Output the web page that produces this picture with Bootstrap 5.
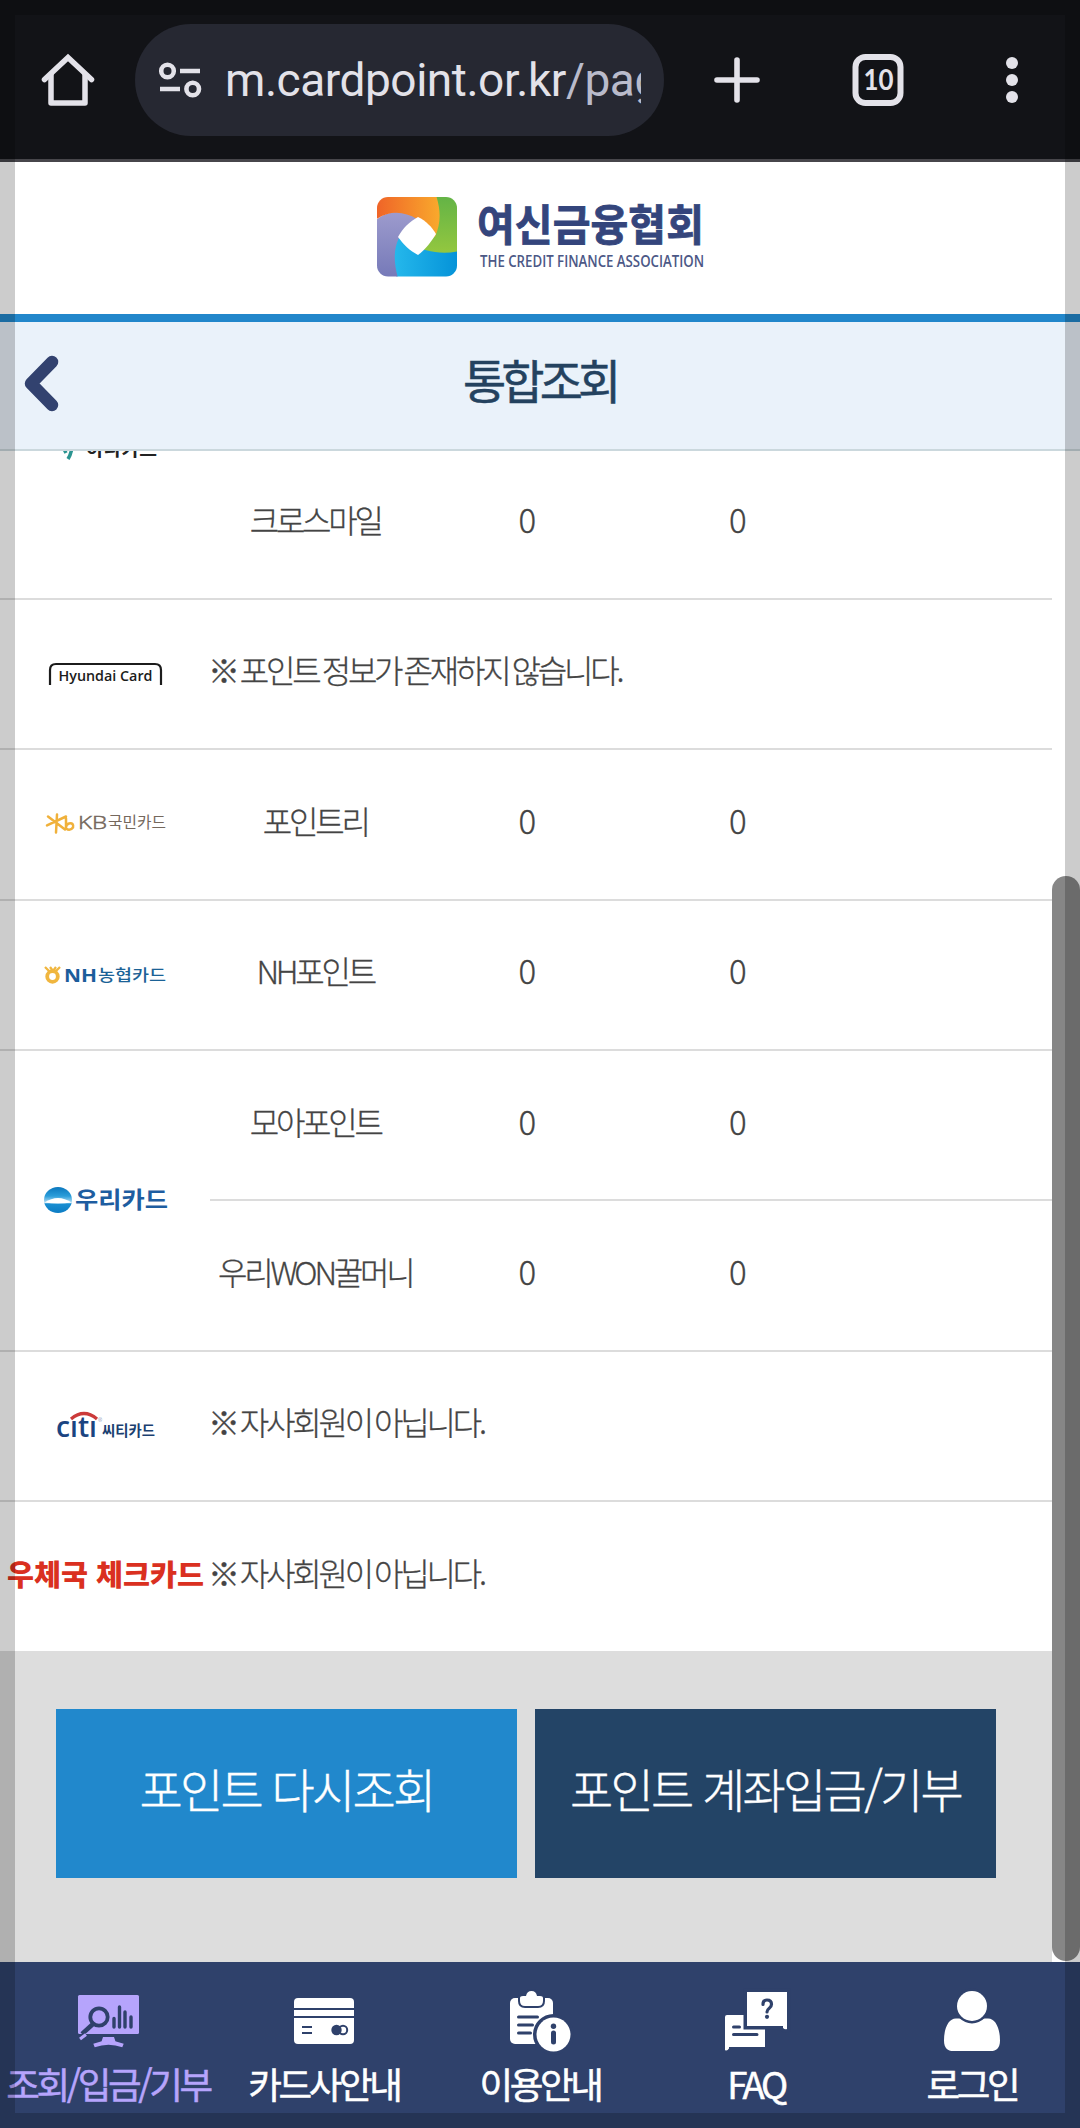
<!DOCTYPE html>
<html lang="ko">
<head>
<meta charset="utf-8">
<meta name="viewport" content="width=device-width, initial-scale=1">
<title>통합조회</title>
<link href="https://cdn.jsdelivr.net/npm/bootstrap@5.3.0/dist/css/bootstrap.min.css" rel="stylesheet">
<script src="https://cdn.jsdelivr.net/npm/bootstrap@5.3.0/dist/js/bootstrap.bundle.min.js"></script>
<style>
body{font-family:"Noto Sans CJK KR","Noto Sans",sans-serif;font-weight:300;color:#444;background:#fff}
svg{display:block;overflow:visible}
.screen{width:1080px;height:2128px}
.frame-edge{inset:0;border:15px solid rgba(0,0,0,.2);z-index:20;pointer-events:none}
.browser-bar{height:162px;background:#121317;border-bottom:3px solid #47464b}
.url-pill{width:529px;height:112px;margin-left:41px;padding:0 23px 0 24px;background:#262832}
.url-text{font:400 46px/112px Roboto,sans-serif;color:#e3e2e9;letter-spacing:-.45px;margin-left:23px}
.url-text span{color:#b9bbcb}
.brand-bar{height:152px}
.title-bar{height:137px;background:#eaf2fa;border-top:8px solid #2287cb;border-bottom:2px solid #cbd8dd;padding-bottom:6px;z-index:5}
.title-bar h1{font-size:47px;font-weight:400;-webkit-text-stroke:.5px #24425f;letter-spacing:-4.9px;color:#24425f;line-height:60px;margin-left:419px;padding-bottom:7px}
.list-area{width:1052px;height:1200px}
.point-list{margin-top:-152px}
.issuer{border-bottom:2px solid #dcdcdc}
.issuer-logo{width:210px}
.point-row{height:148.4px;font-size:32px;letter-spacing:-3.2px;line-height:48px;padding-bottom:9px;-webkit-text-stroke:.3px #444}
.point-row+.point-row{border-top:2px solid #dcdcdc;height:150.4px}
.point-row>*{width:210.5px;text-align:center}
.point-row>.num{letter-spacing:0;padding-left:3px;font-size:33px}
.point-row>.note{width:auto;text-align:left;margin-left:-2px;word-spacing:-2.7px}
.action-area{width:1052px;height:311px;background:#ddd;padding:58px 56px 0;gap:18px}
.act{height:169px;border-radius:0;border:0;font-size:47px;font-weight:300;-webkit-text-stroke:.4px #fff;letter-spacing:-2.7px;color:#fff;padding:0 0 10px;white-space:nowrap}
.act,.act:hover{color:#fff}
.act-a,.act-a:hover{background:#2188cc}
.act-b,.act-b:hover{background:#234466}
.thumb{right:0;top:876px;width:28px;height:1085px;border-radius:14px;background:#868686;z-index:8}
.tabbar{height:166px;background:#2f416b}
.tabbar a{width:216px;color:#fff;text-decoration:none;font-size:36.6px;font-weight:400;-webkit-text-stroke:.5px currentColor;letter-spacing:-3.4px;line-height:44px;text-align:center;white-space:nowrap}
.tabbar a.on{color:#b6a4fc}
</style>
</head>
<body>
<div class="screen position-relative overflow-hidden d-flex flex-column">
  <header class="browser-bar d-flex align-items-center flex-shrink-0">
    <svg class="flex-shrink-0" width="94" height="160" viewBox="0 0 94 160" fill="none" stroke="#e3e2e9" stroke-width="5.5" stroke-linecap="round" stroke-linejoin="round"><path stroke-linejoin="miter" d="M44.5 79.5 68 57.5 91.5 79.5"/><path stroke-linecap="butt" d="M51 74V103H85V74"/></svg>
    <div class="url-pill rounded-pill d-flex align-items-center overflow-hidden">
      <svg class="flex-shrink-0" width="43" height="40" viewBox="159 60 43 40" fill="none" stroke="#e3e2e9" stroke-width="4.6"><circle cx="167.5" cy="71" r="6.3"/><path d="M180 71h20M160 89h20"/><circle cx="192.7" cy="89" r="6.3"/></svg>
      <div class="url-text text-nowrap overflow-hidden flex-grow-1">m.cardpoint.or.kr<span>/page</span></div>
    </div>
    <svg width="416" height="160" viewBox="664 0 416 160"><path d="M737 60v40M717 80h40" stroke="#e3e2e9" stroke-width="5.6" stroke-linecap="round"/><rect x="855.5" y="57" width="45" height="46" rx="10" fill="none" stroke="#e3e2e9" stroke-width="6"/><text x="878.500" y="90" font-family="Lato" font-weight="700" font-size="28" fill="#e3e2e9" text-anchor="middle" textLength="30" lengthAdjust="spacingAndGlyphs">10</text><g fill="#e3e2e9"><circle cx="1012" cy="63" r="6"/><circle cx="1012" cy="80" r="6"/><circle cx="1012" cy="97" r="6"/></g></svg>
  </header>

  <div class="brand-bar d-flex justify-content-center flex-shrink-0">
    <svg width="340" height="152" viewBox="370 162 340 152">
      <defs>
        <clipPath id="tile"><rect x="377" y="197" width="80" height="79.500" rx="11"/></clipPath>
        <linearGradient id="or"><stop offset="0" stop-color="#ef6228"/><stop offset="1" stop-color="#f9a92c"/></linearGradient>
        <linearGradient id="gr" x2="0" y2="1"><stop offset="0" stop-color="#62b346"/><stop offset="1" stop-color="#9bca3e"/></linearGradient>
        <linearGradient id="bl"><stop offset="0" stop-color="#26b9ec"/><stop offset="1" stop-color="#0492d8"/></linearGradient>
        <linearGradient id="pu" x2="0" y2="1"><stop offset="0" stop-color="#9d9bcd"/><stop offset="1" stop-color="#7579b8"/></linearGradient>
      </defs>
      <g clip-path="url(#tile)">
        <path d="M432 195h27v66c-20 2-34-1-46-10z" fill="url(#gr)"/>
        <path d="M398 232c-8 16-8 31-1 46h62v-27c-17 4-34 1-50-8z" fill="url(#bl)"/>
        <path d="M375 221c12-12 32-11 46-3l-22 20c-6 12-5 26-1 40h-23z" fill="url(#pu)"/>
        <path d="M375 195h61c5 16 5 28-1 42l-18-18c-13-8-28-9-42 1z" fill="url(#or)"/>
        <path d="M418 217c8 4 14 10 18 17-5 8-10 15-18 21-8-4-15-11-20-18 5-9 11-15 20-20z" fill="#fff"/>
      </g>
      <text x="477" y="241" font-size="43" font-weight="700" stroke="#34457c" stroke-width=".8" fill="#34457c" textLength="227" lengthAdjust="spacingAndGlyphs">여신금융협회</text>
      <text x="480" y="267" font-family="Open Sans" font-size="15.500" font-weight="600" fill="#4c5886" textLength="224" lengthAdjust="spacingAndGlyphs">THE CREDIT FINANCE ASSOCIATION</text>
    </svg>
  </div>

  <div class="title-bar d-flex align-items-center flex-shrink-0 position-relative">
    <svg class="ms-4" width="20" height="56" viewBox="25 355 20 56"><path d="M53 362 32 383.500 53 405" fill="none" stroke="#32426f" stroke-width="12.500" stroke-linecap="round" stroke-linejoin="round"/></svg>
    <h1 class="mb-0">통합조회</h1>
  </div>

  <main class="list-area overflow-hidden flex-shrink-0">
    <div class="point-list">
      <section class="issuer d-flex">
        <svg class="issuer-logo" height="298.800" viewBox="0 299 210 298.800"><path d="M63 447l3 6M72 445c0 5-1 9-4 14" stroke="#2a9490" stroke-width="3.500" fill="none"/><text x="86" y="456" font-size="19" font-weight="700" fill="#222" textLength="71" lengthAdjust="spacingAndGlyphs">하나카드</text></svg>
        <div class="flex-grow-1"><div class="point-row"></div>
        <div class="point-row d-flex align-items-center"><div>크로스마일</div><div class="num">0</div><div class="num">0</div></div></div>
      </section>
      <section class="issuer d-flex">
        <svg class="issuer-logo" height="148.400" viewBox="0 600 210 148.400"><path d="M50 685V670q0-6 6-6h99q6 0 6 6v15" fill="none" stroke="#1c1c1c" stroke-width="2.200"/><text x="58.500" y="681" font-family="Open Sans" font-size="14.500" font-weight="600" fill="#1c1c1c" textLength="94" lengthAdjust="spacingAndGlyphs">Hyundai Card</text></svg>
        <div class="point-row d-flex align-items-center"><div class="note">※ 포인트 정보가 존재하지 않습니다.</div></div>
      </section>
      <section class="issuer d-flex">
        <svg class="issuer-logo" height="148.400" viewBox="0 750.5 210 148.400"><path d="M57 815l-1 18M48 817l17 13M47 826l19-9M66 819v10q4 3 7-1 1-5-4-4-3 1-3 4" fill="none" stroke="#f0b13b" stroke-width="2.500" stroke-linecap="round"/><text x="78" y="829.500" font-family="Open Sans" font-size="19" fill="#75685d" stroke="#75685d" stroke-width=".5" textLength="29" lengthAdjust="spacingAndGlyphs">KB</text><text x="108" y="829" font-size="15.500" font-weight="400" fill="#75685d" textLength="58" lengthAdjust="spacingAndGlyphs">국민카드</text></svg>
        <div class="point-row d-flex align-items-center"><div>포인트리</div><div class="num">0</div><div class="num">0</div></div>
      </section>
      <section class="issuer d-flex">
        <svg class="issuer-logo" height="148.400" viewBox="0 901 210 148.400"><circle cx="52.500" cy="976.500" r="5.300" fill="none" stroke="#f0b63f" stroke-width="3.800"/><path d="M45 967l5 5M60 967l-5 5M50 967l3 4 3-4" fill="none" stroke="#f0b63f" stroke-width="2.300"/><text x="64" y="982" font-family="Open Sans" font-size="18" font-weight="700" fill="#1b5d9b" textLength="33" lengthAdjust="spacingAndGlyphs">NH</text><text x="98" y="981" font-size="16" font-weight="500" fill="#1b6296" textLength="68" lengthAdjust="spacingAndGlyphs">농협카드</text></svg>
        <div class="point-row d-flex align-items-center"><div>NH포인트</div><div class="num">0</div><div class="num">0</div></div>
      </section>
      <section class="issuer d-flex">
        <svg class="issuer-logo" height="298.800" viewBox="0 1051.5 210 298.800"><defs><linearGradient id="wo" x2="0" y2="1"><stop offset="0" stop-color="#0b77bd"/><stop offset=".35" stop-color="#2a9dda"/><stop offset=".62" stop-color="#bfe4f7"/><stop offset=".64" stop-color="#1a8fd2"/><stop offset="1" stop-color="#0c7cc4"/></linearGradient></defs><ellipse cx="58" cy="1200.500" rx="14" ry="13" fill="url(#wo)"/><path d="M44.500 1203q13.500-9 27 0-13.500 2-27 0z" fill="#fff"/><text x="75" y="1208.500" font-size="23" font-weight="700" fill="#1e5da0" textLength="93" lengthAdjust="spacingAndGlyphs">우리카드</text></svg>
        <div class="flex-grow-1"><div class="point-row d-flex align-items-center"><div>모아포인트</div><div class="num">0</div><div class="num">0</div></div>
        <div class="point-row d-flex align-items-center"><div>우리WON꿀머니</div><div class="num">0</div><div class="num">0</div></div></div>
      </section>
      <section class="issuer d-flex">
        <svg class="issuer-logo" height="148.400" viewBox="0 1352.5 210 148.400"><text x="56" y="1438" font-family="Open Sans" font-size="29" font-weight="600" fill="#1b4481" textLength="41" lengthAdjust="spacingAndGlyphs">cıtı</text><path d="M71 1419.500q13-11 26 0" fill="none" stroke="#cb3a3a" stroke-width="3.200"/><text x="98" y="1423" font-family="Open Sans" font-size="5" fill="#1b4481">®</text><text x="102" y="1437" font-size="14.500" font-weight="700" fill="#1b3f70" textLength="53" lengthAdjust="spacingAndGlyphs">씨티카드</text></svg>
        <div class="point-row d-flex align-items-center"><div class="note">※ 자사회원이 아닙니다.</div></div>
      </section>
      <section class="issuer d-flex">
        <svg class="issuer-logo" height="148.400" viewBox="0 1503 210 148.400"><text x="7" y="1587.500" font-size="29" font-weight="900" fill="#da3020" textLength="197" lengthAdjust="spacingAndGlyphs">우체국 체크카드</text></svg>
        <div class="point-row d-flex align-items-center"><div class="note">※ 자사회원이 아닙니다.</div></div>
      </section>
    </div>
  </main>

  <div class="action-area d-flex align-items-start flex-shrink-0">
    <button class="btn act act-a flex-fill w-50">포인트 다시조회</button>
    <button class="btn act act-b flex-fill w-50">포인트 계좌입금/기부</button>
  </div>
  <div class="thumb position-absolute"></div>

  <nav class="tabbar d-flex flex-shrink-0">
    <a href="#" class="on"><svg width="216" height="100" viewBox="0 1962 216 100"><rect x="78" y="1995" width="61" height="39" rx="1.500" fill="#b6a4fc"/><g fill="none" stroke="#2f416b"><circle cx="99" cy="2017" r="8.700" stroke-width="3.800"/><path d="M93 2024l-11 10" stroke-width="4.500"/><path d="M114 2018.500v8.500M119.500 2007v20M125 2012v15M131 2017v10" stroke-width="3.400" stroke-linecap="round"/></g><path d="M103 2037h11l2 6h-15z" fill="#b6a4fc"/><path d="M86 2034.500l-6 4.500" stroke="#b6a4fc" stroke-width="3.200"/><path d="M94 2045.500q14.500-5.500 29 0" fill="none" stroke="#b6a4fc" stroke-width="4"/></svg>조회/입금/기부</a>
    <a href="#"><svg width="216" height="100" viewBox="216 1962 216 100"><rect x="294" y="1998" width="60" height="46" rx="4" fill="#fff"/><g fill="none" stroke="#2f416b" stroke-width="2"><path d="M294 2009h60M294 2017h60M302 2027h10M302 2033h10"/><circle cx="343" cy="2030" r="4.200"/></g><circle cx="336.500" cy="2030" r="5.200" fill="#2f416b"/></svg>카드사안내</a>
    <a href="#"><svg width="216" height="100" viewBox="432 1962 216 100"><rect x="510" y="1998" width="43" height="46" rx="5" fill="#fff"/><path d="M520 1998q0-2 3-2h3q1-5 5.500-5t5.500 5h3q3 0 3 2v3q0 5-5 5h-13q-5 0-5-5z" fill="#fff" stroke="#2f416b" stroke-width="4" paint-order="stroke"/><path d="M518.500 2017h19M518.500 2025h14M518.500 2033h12" stroke="#2f416b" stroke-width="3" stroke-linecap="round"/><circle cx="553.500" cy="2034.500" r="17" fill="#fff" stroke="#2f416b" stroke-width="7" paint-order="stroke"/><circle cx="553.500" cy="2026.300" r="2.700" fill="#2f416b"/><path d="M553.500 2033v9" stroke="#2f416b" stroke-width="5" stroke-linecap="round"/></svg>이용안내</a>
    <a href="#"><svg width="216" height="100" viewBox="648 1962 216 100"><path d="M725 2017q0-2 2-2h38v32h-36v1.500q-2 3-4 1.500z" fill="#fff"/><path d="M747 1992h40v37q-2 1-4-1v-2h-36z" fill="#fff" stroke="#2f416b" stroke-width="7" paint-order="stroke"/><path d="M733.500 2027h6M733.500 2034.500h23.500" stroke="#2f416b" stroke-width="3" stroke-linecap="round"/><path d="M763 2004.500q0-4.500 4-4.500 4.500 0 4.500 4.200 0 2.500-2.500 4.300-2 1.500-2 3.500" fill="none" stroke="#2f416b" stroke-width="3.200" stroke-linecap="round"/><circle cx="767" cy="2016.800" r="2.100" fill="#2f416b"/></svg>FAQ</a>
    <a href="#"><svg width="216" height="100" viewBox="864 1962 216 100" fill="#fff"><path d="M957 2018.500c-8-1-13 9-13 22 0 8 4 10.500 9 10.500h38c5 0 9-2.500 9-10.500 0-13-5-23-13-22z"/><circle cx="972" cy="2006" r="15" stroke="#2f416b" stroke-width="5" paint-order="stroke"/></svg>로그인</a>
  </nav>
  <div class="frame-edge position-absolute"></div>
</div>
</body>
</html>
